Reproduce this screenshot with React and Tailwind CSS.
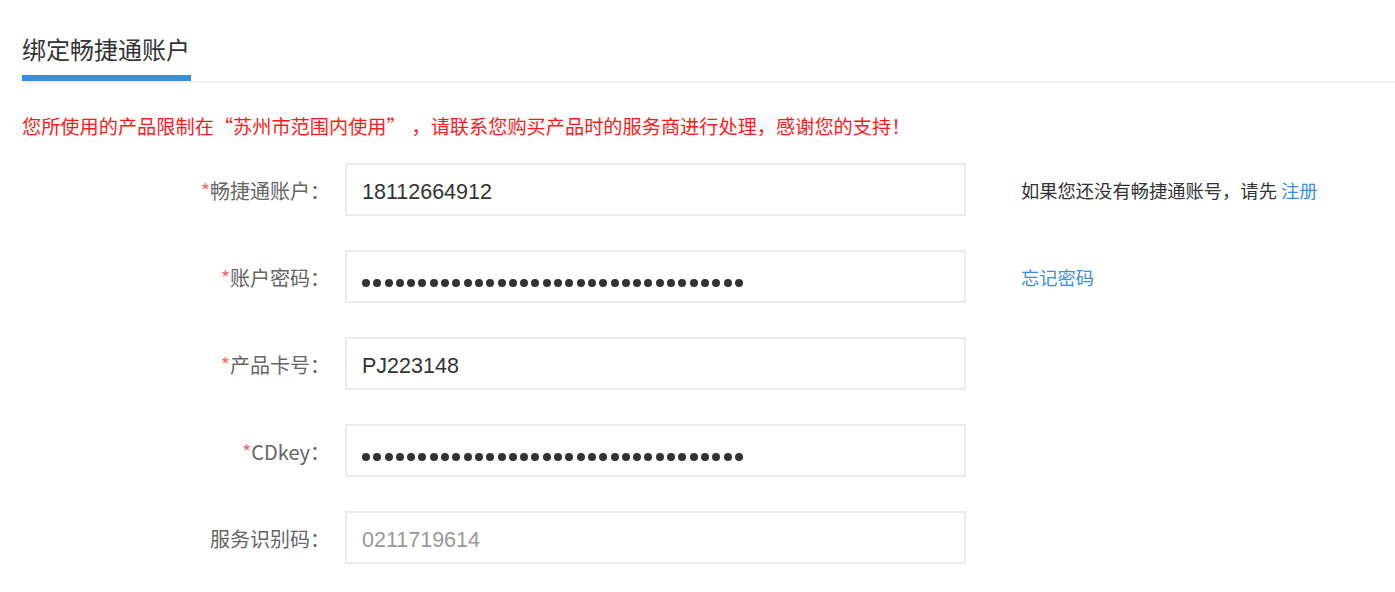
import React from "react";

const latin = { fontFamily: '"Liberation Sans", "Noto Sans CJK SC", sans-serif' };
const cjk = { fontFamily: '"Noto Sans CJK SC", "Liberation Sans", sans-serif' };

const Dots = ({ n = 34 }) => (
  <div className="flex items-center gap-[3.3px] mt-[6px]">
    {Array.from({ length: n }).map((_, i) => (
      <span key={i} className="w-[8px] h-[8px] rounded-full bg-[#333]" />
    ))}
  </div>
);

const Row = ({ label, required, children, extra }) => (
  <div className="flex items-center h-[53px]">
    <div className="w-[308px] pt-[3px] text-right text-[20px] text-[#666]" style={cjk}>
      {required && <span className="text-[#f56c6c]">*</span>}
      {label}
    </div>
    <div className="ml-[15px] w-[621px] h-[53px] border-2 border-[#ebebeb] flex items-center pl-[15px] pt-[6px] text-[21.5px] text-[#333]" style={latin}>
      {children}
    </div>
    {extra && <div className="ml-[55px] pt-[3px] text-[18.3px] text-[#333]" style={cjk}>{extra}</div>}
  </div>
);

export default function App() {
  return (
    <div className="w-[1395px] h-[592px] bg-white overflow-hidden">
      <div className="ml-[22px] pt-[33px] border-b-2 border-[#eef1f5]">
        <div className="inline-block pb-[10px] border-b-[6px] border-[#3a8ee6]">
          <span className="block text-[24px] leading-[32px] text-[#333] pr-[1px]" style={cjk}>绑定畅捷通账户</span>
        </div>
      </div>
      <p className="ml-[22px] mt-[30px] text-[19.2px] leading-[26px] text-[#ff1a1a]" style={cjk}>
        您所使用的产品限制在<span className="inline-block w-[1em] text-right">“</span>苏州市范围内使用<span className="inline-block w-[1em] text-left">”</span><span className="inline-block w-[0.3em]" />，请联系您购买产品时的服务商进行处理，感谢您的支持！
      </p>
      <div className="mt-[24px] pl-[22px] flex flex-col gap-[34px]">
        <Row
          label="畅捷通账户："
          required
          extra={
            <>
              如果您还没有畅捷通账号，请先 <a className="text-[#3a8ee6]">注册</a>
            </>
          }
        >
          18112664912
        </Row>
        <Row label="账户密码：" required extra={<a className="text-[#3a8ee6]">忘记密码</a>}>
          <Dots />
        </Row>
        <Row label="产品卡号：" required>PJ223148</Row>
        <Row label="CDkey：" required>
          <Dots />
        </Row>
        <Row label="服务识别码：">
          <span className="text-[#999]">0211719614</span>
        </Row>
      </div>
    </div>
  );
}
